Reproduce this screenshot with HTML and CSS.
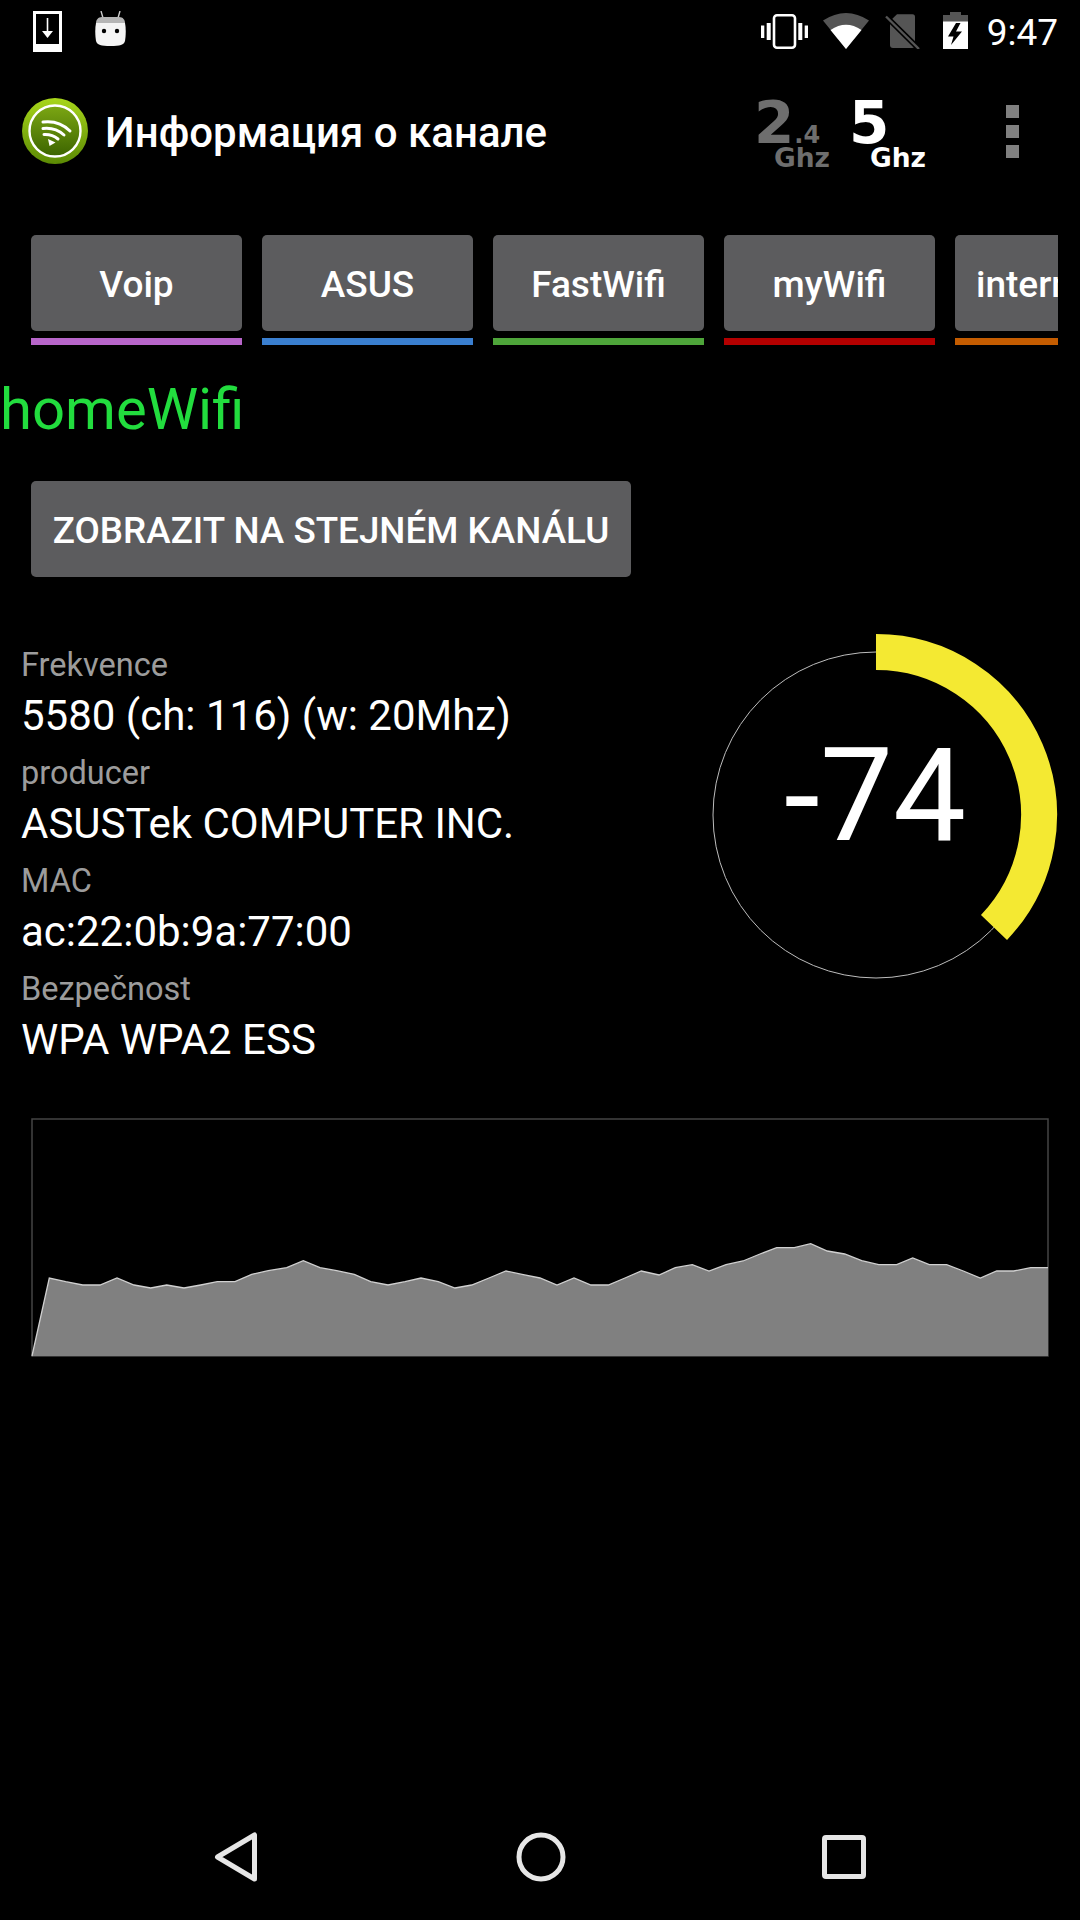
FILE: index.html
```html
<!DOCTYPE html>
<html lang="cs">
<head>
<meta charset="utf-8">
<title>Channel info</title>
<link rel="stylesheet" href="styles.css">
</head>
<body>
<div class="screen">
  <header class="status">
    <div class="status-left">
      <svg class="ic-download" viewBox="0 0 29 41"><path d="M0 0H29V41H0Z M3 3V33H26V3Z" fill="#fff" fill-rule="evenodd"/><path d="M14.5 7V24" stroke="#fff" stroke-width="1.6" fill="none"/><path d="M9 20H20L14.5 27Z" fill="#fff"/></svg>
      <svg class="ic-android" viewBox="0 0 31 36"><path d="M6 0L8 7M25 0L23 7" stroke="#ccc" stroke-width="1.4" fill="none"/><path d="M7 6H24C28 6 30 9 30 12H1C1 9 3 6 7 6Z" fill="#b5b5b5"/><path d="M1 12H30C31 17 31 24 30 30C29 34 25 35 15.500 35C6 35 2 34 1 30C0 24 0 17 1 12Z" fill="#f4f4f4"/><circle cx="9" cy="20" r="2.200" fill="#000"/><circle cx="22" cy="20" r="2.200" fill="#000"/></svg>
    </div>
    <div class="status-right">
      <svg class="ic-vibrate" viewBox="0 0 47 35"><rect x="13" y="1.300" width="21" height="32.400" rx="3" fill="none" stroke="#fff" stroke-width="2.600"/><path d="M0 11.500H3.300V24H0Z M5.700 9H9.700V26H5.700Z M37.300 9H41.300V26H37.300Z M43.700 11.500H47V24H43.700Z" fill="#fff"/></svg>
      <svg class="ic-wifi" viewBox="0 0 46 36"><path d="M0 7.500Q23 -7.500 46 7.500L23 36Z" fill="#555"/><path d="M7.500 17Q23 6.500 38.500 17L23 36Z" fill="#fff"/></svg>
      <svg class="ic-nosim" viewBox="0 0 36 36"><path d="M12 1.300H27.500Q30 1.300 30 4V32Q30 35 27 35H8Q5 35 5 32V8Z" fill="#555"/><path d="M1 3.500L34 36" stroke="#000" stroke-width="5.500"/><path d="M1 3.500L34 36" stroke="#555" stroke-width="2.400"/></svg>
      <svg class="ic-battery" viewBox="0 0 25 37"><path d="M7 0H18V3H25V37H0V3H7Z" fill="#555"/><path d="M0 9.500H25V37H0Z" fill="#fff"/><path d="M13 11H17.500L13 19.500H19L8 33L10.500 24.500H5Z" fill="#000"/></svg>
      <span class="clock">9:47</span>
    </div>
  </header>

  <div class="appbar">
    <svg class="logo" viewBox="0 0 66 66">
      <defs>
        <linearGradient id="lo" x1="0" y1="0" x2="0" y2="1"><stop offset="0" stop-color="#a8d61a"/><stop offset="1" stop-color="#5b8a04"/></linearGradient>
        <linearGradient id="li" x1="0" y1="0" x2="0" y2="1"><stop offset="0" stop-color="#7ca713"/><stop offset="1" stop-color="#3c6400"/></linearGradient>
      </defs>
      <circle cx="33" cy="33" r="33" fill="url(#lo)"/>
      <circle cx="33" cy="33" r="25.500" fill="url(#li)" stroke="#fff" stroke-width="2.400"/>
      <g fill="none" stroke="#fff" stroke-width="3" stroke-linecap="round"><path d="M21 24Q37 22 48 33"/><path d="M21 30.500Q33 29 42 37"/><path d="M22 36.500Q30 36 36 41"/></g>
      <path d="M26 41L33.500 44.500L27.500 48Z" fill="#fff"/>
    </svg>
    <h1 class="title">Информация о канале</h1>
    <div class="band band-24"><div class="band-num">2<small>.4</small></div><div class="band-unit">Ghz</div></div>
    <div class="band band-5"><div class="band-num">5</div><div class="band-unit">Ghz</div></div>
    <div class="overflow"><i></i><i></i><i></i></div>
  </div>

  <nav class="tabs">
    <div class="tab"><div class="tab-btn">Voip</div><div class="tab-line line-voip"></div></div>
    <div class="tab"><div class="tab-btn">ASUS</div><div class="tab-line line-asus"></div></div>
    <div class="tab"><div class="tab-btn">FastWifi</div><div class="tab-line line-fast"></div></div>
    <div class="tab"><div class="tab-btn">myWifi</div><div class="tab-line line-my"></div></div>
    <div class="tab"><div class="tab-btn">internet</div><div class="tab-line line-inet"></div></div>
  </nav>

  <h2 class="ssid">homeWifi</h2>
  <button class="same">ZOBRAZIT NA STEJNÉM KANÁLU</button>

  <section class="details">
    <dl class="info">
      <dt>Frekvence</dt><dd>5580 (ch: 116) (w: 20Mhz)</dd>
      <dt>producer</dt><dd>ASUSTek COMPUTER INC.</dd>
      <dt>MAC</dt><dd>ac:22:0b:9a:77:00</dd>
      <dt>Bezpečnost</dt><dd>WPA WPA2 ESS</dd>
    </dl>
    <div class="gauge">
      <svg class="gauge-svg" viewBox="0 0 360 360">
        <circle cx="181" cy="181" r="163" fill="none" stroke="#bdbdbd" stroke-width="1"/>
        <path d="M181 18A163 163 0 0 1 299 293.500" fill="none" stroke="#f4e932" stroke-width="36"/>
      </svg>
      <span class="gauge-val">-74</span>
    </div>
  </section>

  <div class="chart">
    <svg class="chart-svg" viewBox="31 1117 1018 240">
      <path d="M32 1119V1356H1048V1119Z" fill="none" stroke="#444" stroke-width="1.500"/>
      <path d="M32 1356L49.300 1278L65.700 1281.700L82.700 1285L100 1285L117 1278L134 1285L150.700 1288L166.700 1285L184 1288L200.700 1285L217.300 1281.700L235 1281.700L251.700 1274.300L268.300 1270.700L286.700 1267.700L303.300 1260.700L320 1267.700L336.700 1270.700L354.300 1274.300L370.700 1281.700L388 1285L405 1281.700L421 1278L438.300 1281.700L455 1288L471.700 1285L489 1278L506 1271L523.300 1274.700L540 1278L557 1285L574 1278L591 1285L608.300 1285L625 1278L641.300 1271L659 1275L675.300 1267.700L692.300 1264.700L709 1271L726 1264.700L743 1261L760 1254L776.700 1247.700L794.300 1247.700L810.700 1243.700L827.300 1251L844.700 1254L861.700 1260.700L878.700 1264.700L896.700 1264.700L912.700 1258L929.300 1264.700L946.700 1264.700L963.300 1271L980.300 1278L996.700 1271L1013.700 1271L1030.700 1267.700L1048 1267.700V1356Z" fill="#808080"/>
      <path d="M32 1356L49.300 1278L65.700 1281.700L82.700 1285L100 1285L117 1278L134 1285L150.700 1288L166.700 1285L184 1288L200.700 1285L217.300 1281.700L235 1281.700L251.700 1274.300L268.300 1270.700L286.700 1267.700L303.300 1260.700L320 1267.700L336.700 1270.700L354.300 1274.300L370.700 1281.700L388 1285L405 1281.700L421 1278L438.300 1281.700L455 1288L471.700 1285L489 1278L506 1271L523.300 1274.700L540 1278L557 1285L574 1278L591 1285L608.300 1285L625 1278L641.300 1271L659 1275L675.300 1267.700L692.300 1264.700L709 1271L726 1264.700L743 1261L760 1254L776.700 1247.700L794.300 1247.700L810.700 1243.700L827.300 1251L844.700 1254L861.700 1260.700L878.700 1264.700L896.700 1264.700L912.700 1258L929.300 1264.700L946.700 1264.700L963.300 1271L980.300 1278L996.700 1271L1013.700 1271L1030.700 1267.700L1048 1267.700" fill="none" stroke="#d0d0d0" stroke-width="1.300"/>
    </svg>
  </div>

  <footer class="navbar">
    <svg class="nav-back" viewBox="0 0 46 50"><path d="M40.500 3V47L3.500 25Z" fill="none" stroke="#e6e6e6" stroke-width="5" stroke-linejoin="round"/></svg>
    <svg class="nav-home" viewBox="0 0 50 50"><circle cx="25" cy="25" r="22" fill="none" stroke="#e6e6e6" stroke-width="5"/></svg>
    <svg class="nav-recent" viewBox="0 0 44 44"><rect x="2.500" y="2.500" width="39" height="39" rx="1.500" fill="none" stroke="#e6e6e6" stroke-width="5"/></svg>
  </footer>
</div>
</body>
</html>
```

FILE: styles.css
```css
* { box-sizing: border-box; }
html, body { margin: 0; padding: 0; background: #000; }
.screen {
  width: 1080px;
  height: 1920px;
  overflow: hidden;
  background: #000;
  color: #fff;
  font-family: Roboto, "Noto Sans", sans-serif;
  display: flex;
  flex-direction: column;
}
svg { display: block; flex: none; }

/* status bar */
.status { height: 75px; display: flex; justify-content: space-between; padding: 11px 22px 0 33px; }
.status-left { display: flex; gap: 33px; align-items: flex-start; }
.ic-download { width: 29px; height: 41px; }
.ic-android { width: 31px; height: 36px; }
.status-right { display: flex; align-items: flex-start; }
.ic-vibrate { width: 47px; height: 35px; margin: 3px 15px 0 0; }
.ic-wifi { width: 46px; height: 36px; margin: 2px 16px 0 0; }
.ic-nosim { width: 36px; height: 36px; margin: 2px 22px 0 0; }
.ic-battery { width: 25px; height: 37px; margin: 1px 19px 0 0; }
.clock { font-size: 37px; line-height: 42px; margin-top: 1px; }

/* action bar */
.appbar { height: 99px; padding-left: 22px; display: flex; align-items: flex-start; }
.logo { width: 66px; height: 66px; margin-top: 23px; }
.title { margin: 35px 0 0 17px; font-size: 42px; line-height: 46px; font-weight: 500; width: 649px; white-space: nowrap; }
.band { font-family: "DejaVu Sans", sans-serif; font-weight: 700; color: #6e6e6e; margin-top: 24px; width: 95px; }
.band-5 { color: #fff; width: 157px; }
.band-num { font-size: 58px; line-height: 48px; }
.band-num small { font-size: 24px; line-height: 0; }
.band-unit { font-size: 26.500px; line-height: 24px; margin-top: -1px; padding-left: 20px; }
.band-5 .band-unit { padding-left: 21px; }
.overflow { display: flex; flex-direction: column; gap: 7px; margin-top: 30px; }
.overflow i { display: block; width: 13px; height: 13px; background: #808080; }

/* tabs */
.tabs { margin: 61px 22px 0 31px; display: flex; gap: 20px; overflow: hidden; flex: none; }
.tab { flex: 0 0 211px; }
.tab-btn { height: 96px; padding-top: 2px; background: #5c5c5e; border-radius: 5px; display: flex; align-items: center; justify-content: center; font-size: 37px; font-weight: 500; white-space: nowrap; overflow: hidden; }
.tab:last-child .tab-btn { border-radius: 5px 0 0 5px; justify-content: flex-start; padding-left: 21px; }
.tab-line { height: 7px; margin-top: 7px; }
.line-voip { background: #b765c9; }
.line-asus { background: #3a7fd0; }
.line-fast { background: #4ea53a; }
.line-my { background: #b40000; }
.line-inet { background: #c45c00; }

.ssid { margin: 32px 0 0 0; font-size: 58px; line-height: 64px; font-weight: 400; color: #22dd3e; }

.same { margin: 40px 0 0 31px; width: 600px; height: 96px; border: 0; padding: 2px 0 0; background: #5c5c5e; border-radius: 5px; color: #fff; font: 500 36.800px Roboto, sans-serif; align-self: flex-start; }

/* details */
.details { display: flex; justify-content: space-between; margin-top: 57px; padding-left: 21px; padding-right: 25px; height: 483px; }
.info { margin: 12px 0 0; }
.info dt { font-size: 32.500px; line-height: 38px; color: #9c9c9c; }
.info dd { margin: 1px 0 7px; font-size: 42px; line-height: 62px; }
.gauge { position: relative; width: 360px; height: 360px; padding-bottom: 36px; display: flex; align-items: center; justify-content: center; }
.gauge-svg { position: absolute; left: 0; top: 0; width: 360px; height: 360px; overflow: visible; }
.gauge-val { position: relative; font-size: 130px; line-height: 1; font-weight: 400; }

/* chart */
.chart { margin: 0 0 0 31px; }
.chart-svg { width: 1018px; height: 240px; }

/* nav bar */
.navbar { margin-top: auto; height: 88px; display: flex; align-items: flex-start; padding: 0 214px 0 214px; justify-content: space-between; }
.nav-back { width: 46px; height: 50px; }
.nav-home { width: 50px; height: 50px; }
.nav-recent { width: 44px; height: 44px; margin-top: 3px; }
```
